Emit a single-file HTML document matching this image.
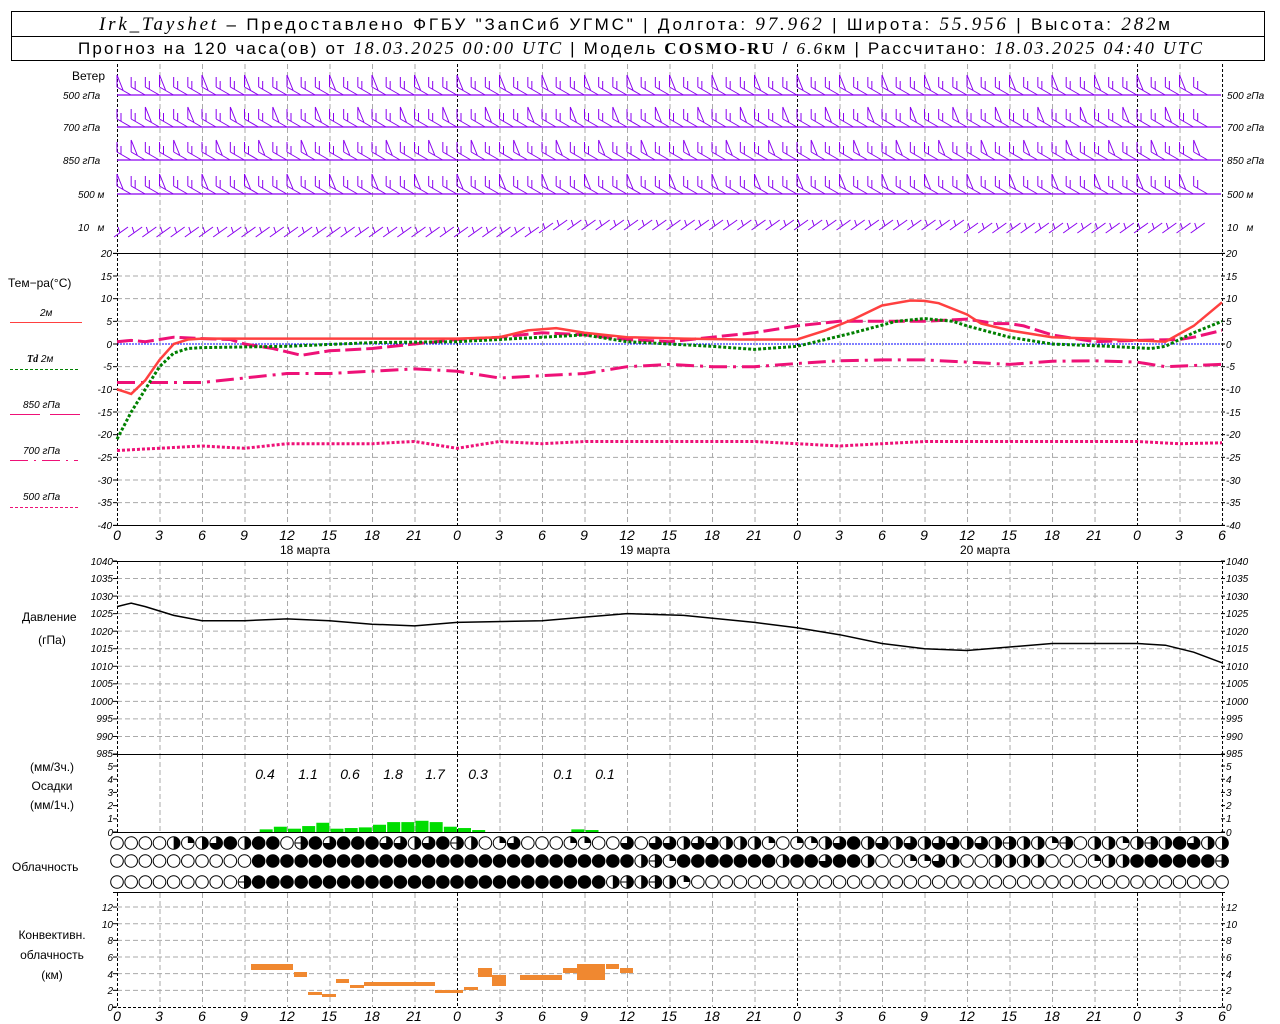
<!DOCTYPE html>
<html><head><meta charset="utf-8"><style>
html,body{margin:0;padding:0;background:#fff;width:1280px;height:1024px;overflow:hidden}
svg{display:block}
text{font-family:"Liberation Sans","DejaVu Sans",sans-serif;fill:#000}
.t{font-size:17px}
.tk{font-size:10px;font-style:italic}
.tm{font-size:14px;font-style:italic}
.lb{font-size:12px}
.it{font-family:"Liberation Serif",serif;font-style:italic}
</style></head><body>
<svg id="s" width="1280" height="1024" viewBox="0 0 1280 1024" xmlns="http://www.w3.org/2000/svg">
<rect x="11.5" y="11.5" width="1253" height="49" fill="none" stroke="#000"/>
<line x1="11" y1="36.5" x2="1265" y2="36.5" stroke="#000"/>
<g id="g"></g>
<!-- header -->
<text class="t" x="99" y="30" textLength="1071" lengthAdjust="spacing"><tspan class="it" font-size="19">Irk_Tayshet</tspan> – Предоставлено ФГБУ "ЗапСиб УГМС" | Долгота: <tspan class="it" font-size="19">97.962</tspan> | Широта: <tspan class="it" font-size="19">55.956</tspan> | Высота: <tspan class="it" font-size="19">282</tspan>м</text>
<text class="t" x="78" y="54" textLength="1124" lengthAdjust="spacing">Прогноз на 120 часа(ов) от <tspan class="it" font-size="18">18.03.2025 00:00 UTC</tspan>  | Модель <tspan font-family="Liberation Serif" font-weight="bold">COSMO-RU</tspan> / <tspan class="it">6.6</tspan>км | Рассчитано: <tspan class="it" font-size="18">18.03.2025 04:40 UTC</tspan></text>
<!-- wind labels -->
<text class="lb" x="72" y="80">Ветер</text>
<g class="tk" font-size="10">
<text class="tk" x="63" y="99">500 гПа</text><text class="tk" x="63" y="131">700 гПа</text><text class="tk" x="63" y="164">850 гПа</text><text class="tk" x="78" y="198">500 м</text><text class="tk" x="78" y="231">10 &#160; м</text>
<text class="tk" x="1227" y="99">500 гПа</text><text class="tk" x="1227" y="131">700 гПа</text><text class="tk" x="1227" y="164">850 гПа</text><text class="tk" x="1227" y="198">500 м</text><text class="tk" x="1227" y="231">10 &#160; м</text>
</g>
<!-- temp labels -->
<text class="lb" x="8" y="287">Тем−ра(°C)</text>
<text class="tk" x="40" y="316" font-style="normal">2м</text>
<line x1="10" y1="322.5" x2="82" y2="322.5" stroke="#ff4040"/>
<text class="tk" x="27" y="362"><tspan class="it" font-weight="bold">Td</tspan>  2м</text>
<line x1="10" y1="369.5" x2="78" y2="369.5" stroke="#008000" stroke-dasharray="3,2"/>
<text class="tk" x="23" y="408">850 гПа</text>
<line x1="10" y1="414.5" x2="82" y2="414.5" stroke="#ee1177" stroke-dasharray="30,10"/>
<text class="tk" x="23" y="454">700 гПа</text>
<line x1="10" y1="460.5" x2="78" y2="460.5" stroke="#ee1177" stroke-dasharray="18,6,2,6"/>
<text class="tk" x="23" y="500">500 гПа</text>
<line x1="10" y1="507.5" x2="78" y2="507.5" stroke="#ee1177" stroke-dasharray="3,2"/>
<g text-anchor="end">
<text class="tk" x="112" y="257">20</text><text class="tk" x="112" y="280">15</text><text class="tk" x="112" y="302">10</text><text class="tk" x="112" y="325">5</text><text class="tk" x="112" y="348">0</text><text class="tk" x="112" y="370">-5</text><text class="tk" x="112" y="393">-10</text><text class="tk" x="112" y="416">-15</text><text class="tk" x="112" y="438">-20</text><text class="tk" x="112" y="461">-25</text><text class="tk" x="112" y="484">-30</text><text class="tk" x="112" y="506">-35</text><text class="tk" x="112" y="529">-40</text>
</g>
<g>
<text class="tk" x="1226" y="257">20</text><text class="tk" x="1226" y="280">15</text><text class="tk" x="1226" y="302">10</text><text class="tk" x="1226" y="325">5</text><text class="tk" x="1226" y="348">0</text><text class="tk" x="1226" y="370">-5</text><text class="tk" x="1226" y="393">-10</text><text class="tk" x="1226" y="416">-15</text><text class="tk" x="1226" y="438">-20</text><text class="tk" x="1226" y="461">-25</text><text class="tk" x="1226" y="484">-30</text><text class="tk" x="1226" y="506">-35</text><text class="tk" x="1226" y="529">-40</text>
</g>
<!-- time labels -->
<g text-anchor="middle">
<text class="tm" x="117" y="540">0</text><text class="tm" x="159" y="540">3</text><text class="tm" x="202" y="540">6</text><text class="tm" x="244" y="540">9</text><text class="tm" x="287" y="540">12</text><text class="tm" x="329" y="540">15</text><text class="tm" x="372" y="540">18</text><text class="tm" x="414" y="540">21</text><text class="tm" x="457" y="540">0</text><text class="tm" x="499" y="540">3</text><text class="tm" x="542" y="540">6</text><text class="tm" x="584" y="540">9</text><text class="tm" x="627" y="540">12</text><text class="tm" x="669" y="540">15</text><text class="tm" x="712" y="540">18</text><text class="tm" x="754" y="540">21</text><text class="tm" x="797" y="540">0</text><text class="tm" x="839" y="540">3</text><text class="tm" x="882" y="540">6</text><text class="tm" x="924" y="540">9</text><text class="tm" x="967" y="540">12</text><text class="tm" x="1009" y="540">15</text><text class="tm" x="1052" y="540">18</text><text class="tm" x="1094" y="540">21</text><text class="tm" x="1137" y="540">0</text><text class="tm" x="1179" y="540">3</text><text class="tm" x="1222" y="540">6</text>
<text class="lb" x="305" y="554" font-size="13">18 марта</text><text class="lb" x="645" y="554" font-size="13">19 марта</text><text class="lb" x="985" y="554" font-size="13">20 марта</text>
<text class="tm" x="117" y="1021">0</text><text class="tm" x="159" y="1021">3</text><text class="tm" x="202" y="1021">6</text><text class="tm" x="244" y="1021">9</text><text class="tm" x="287" y="1021">12</text><text class="tm" x="329" y="1021">15</text><text class="tm" x="372" y="1021">18</text><text class="tm" x="414" y="1021">21</text><text class="tm" x="457" y="1021">0</text><text class="tm" x="499" y="1021">3</text><text class="tm" x="542" y="1021">6</text><text class="tm" x="584" y="1021">9</text><text class="tm" x="627" y="1021">12</text><text class="tm" x="669" y="1021">15</text><text class="tm" x="712" y="1021">18</text><text class="tm" x="754" y="1021">21</text><text class="tm" x="797" y="1021">0</text><text class="tm" x="839" y="1021">3</text><text class="tm" x="882" y="1021">6</text><text class="tm" x="924" y="1021">9</text><text class="tm" x="967" y="1021">12</text><text class="tm" x="1009" y="1021">15</text><text class="tm" x="1052" y="1021">18</text><text class="tm" x="1094" y="1021">21</text><text class="tm" x="1137" y="1021">0</text><text class="tm" x="1179" y="1021">3</text><text class="tm" x="1222" y="1021">6</text>
<text class="lb" x="52" y="644">(гПа)</text>
<text class="lb" x="52" y="771">(мм/3ч.)</text><text class="lb" x="52" y="790">Осадки</text><text class="lb" x="52" y="809">(мм/1ч.)</text>
<text class="lb" x="52" y="939">Конвективн.</text><text class="lb" x="52" y="959">облачность</text><text class="lb" x="52" y="979">(км)</text>
</g>
<text class="lb" x="22" y="621">Давление</text>
<text class="lb" x="12" y="871">Облачность</text>
<!-- pressure ticks -->
<g text-anchor="end">
<text class="tk" x="113" y="565" font-size="9">1040</text><text class="tk" x="113" y="582" font-size="9">1035</text><text class="tk" x="113" y="600" font-size="9">1030</text><text class="tk" x="113" y="617" font-size="9">1025</text><text class="tk" x="113" y="635" font-size="9">1020</text><text class="tk" x="113" y="652" font-size="9">1015</text><text class="tk" x="113" y="670" font-size="9">1010</text><text class="tk" x="113" y="687" font-size="9">1005</text><text class="tk" x="113" y="705" font-size="9">1000</text><text class="tk" x="113" y="722" font-size="9">995</text><text class="tk" x="113" y="740" font-size="9">990</text><text class="tk" x="113" y="757" font-size="9">985</text>
<text class="tk" x="113" y="770">5</text><text class="tk" x="113" y="783">4</text><text class="tk" x="113" y="796">3</text><text class="tk" x="113" y="809">2</text><text class="tk" x="113" y="822">1</text><text class="tk" x="113" y="836">0</text>
<text class="tk" x="113" y="911">12</text><text class="tk" x="113" y="928">10</text><text class="tk" x="113" y="944">8</text><text class="tk" x="113" y="961">6</text><text class="tk" x="113" y="978">4</text><text class="tk" x="113" y="994">2</text><text class="tk" x="113" y="1011">0</text>
</g>
<g>
<text class="tk" x="1226" y="565" font-size="9">1040</text><text class="tk" x="1226" y="582" font-size="9">1035</text><text class="tk" x="1226" y="600" font-size="9">1030</text><text class="tk" x="1226" y="617" font-size="9">1025</text><text class="tk" x="1226" y="635" font-size="9">1020</text><text class="tk" x="1226" y="652" font-size="9">1015</text><text class="tk" x="1226" y="670" font-size="9">1010</text><text class="tk" x="1226" y="687" font-size="9">1005</text><text class="tk" x="1226" y="705" font-size="9">1000</text><text class="tk" x="1226" y="722" font-size="9">995</text><text class="tk" x="1226" y="740" font-size="9">990</text><text class="tk" x="1226" y="757" font-size="9">985</text>
<text class="tk" x="1226" y="770">5</text><text class="tk" x="1226" y="783">4</text><text class="tk" x="1226" y="796">3</text><text class="tk" x="1226" y="809">2</text><text class="tk" x="1226" y="822">1</text><text class="tk" x="1226" y="836">0</text>
<text class="tk" x="1226" y="911">12</text><text class="tk" x="1226" y="928">10</text><text class="tk" x="1226" y="944">8</text><text class="tk" x="1226" y="961">6</text><text class="tk" x="1226" y="978">4</text><text class="tk" x="1226" y="994">2</text><text class="tk" x="1226" y="1011">0</text>
</g>
<g text-anchor="middle">
<text class="tm" font-size="13" x="265" y="779">0.4</text><text class="tm" font-size="13" x="308" y="779">1.1</text><text class="tm" font-size="13" x="350" y="779">0.6</text><text class="tm" font-size="13" x="393" y="779">1.8</text><text class="tm" font-size="13" x="435" y="779">1.7</text><text class="tm" font-size="13" x="478" y="779">0.3</text><text class="tm" font-size="13" x="563" y="779">0.1</text><text class="tm" font-size="13" x="605" y="779">0.1</text>
</g>
</svg>
<script>
var NS="http://www.w3.org/2000/svg",G=document.getElementById("g");
function el(n,a){var e=document.createElementNS(NS,n);for(var k in a)e.setAttribute(k,a[k]);G.appendChild(e);return e}
function X(h){return 117+h*14.167}
function TY(t){return 344-t*4.533}
function PY(p){return 561+(1040-p)*3.509}
function CY(k){return 1007-k*8.33}
var gray="#aaa";
for(var t=15;t>=-35;t-=5){if(t!=0)el("line",{x1:117,x2:1221,y1:TY(t),y2:TY(t),stroke:gray,"stroke-dasharray":"5,3"})}
for(var p=1035;p>985;p-=5)el("line",{x1:117,x2:1221,y1:PY(p),y2:PY(p),stroke:gray,"stroke-dasharray":"5,3"});
for(var k=2;k<=12;k+=2)el("line",{x1:117,x2:1221,y1:CY(k),y2:CY(k),stroke:gray,"stroke-dasharray":"5,3"});
el("line",{x1:117,x2:1221,y1:344,y2:344,stroke:"#0000ff","stroke-dasharray":"2,1","stroke-width":1});
var spans=[[64,253],[253,525],[561,754],[754,832],[893,1007]];
for(var h=0;h<=78;h+=3){var mid=(h%24==0)||h==78;spans.forEach(function(s){el("line",{x1:X(h)+.5,x2:X(h)+.5,y1:s[0],y2:s[1],stroke:mid?"#000":gray,"stroke-dasharray":mid?"3,2":"5,3"})})}
for(t=20;t>=-40;t-=5){el("line",{x1:113,x2:117,y1:TY(t),y2:TY(t),stroke:"#000"});el("line",{x1:1221,x2:1225,y1:TY(t),y2:TY(t),stroke:"#000"})}
for(p=1040;p>=985;p-=5){el("line",{x1:113,x2:117,y1:PY(p),y2:PY(p),stroke:"#000"});el("line",{x1:1221,x2:1225,y1:PY(p),y2:PY(p),stroke:"#000"})}
for(k=0;k<=5;k++){var y=832-k*13.2;el("line",{x1:113,x2:117,y1:y,y2:y,stroke:"#000"});el("line",{x1:1221,x2:1225,y1:y,y2:y,stroke:"#000"})}
for(k=0;k<=12;k+=2){el("line",{x1:113,x2:117,y1:CY(k),y2:CY(k),stroke:"#000"});el("line",{x1:1221,x2:1225,y1:CY(k),y2:CY(k),stroke:"#000"})}
[253.5,525.5,561.5,754.5,832.5,892.5].forEach(function(y){el("line",{x1:113,x2:1225,y1:y,y2:y,stroke:"#000"})});
el("line",{x1:113,x2:1225,y1:1007.5,y2:1007.5,stroke:"#000","stroke-dasharray":"3,2"});
// wind
var W="#8a00f0",lv=[95,127,160,194,228];
lv.forEach(function(y0,i){
 if(i<4){el("line",{x1:117,x2:1221,y1:y0,y2:y0,stroke:W,"stroke-width":1.2});}
 for(var h=0;h<=76;h++){
  var x=X(h)+4,y=y0;
  if(i<4){
   var d="M"+(x+10)+","+(y)+" L"+(x-4)+","+(y-8);
   if((h+i)%3==0){d+=" M"+(x-4)+","+(y-8)+" L"+(x-4)+","+(y-20)+" L"+(x+2)+","+(y-5);}
   else{d+=" M"+(x-4)+","+(y-8)+" L"+(x-4)+","+(y-18)+" M"+(x)+","+(y-6)+" L"+(x)+","+(y-14);}
   el("path",{d:d,stroke:W,fill:"none","stroke-width":1});
  }else{
   var yy=y0+(h<30?4:0)-(h>30&&h<60?3:0);
   el("path",{d:"M"+(x-7)+","+(yy+5)+" L"+(x+7)+","+(yy-5)+" M"+(x-1)+","+(yy+1)+" L"+(x-3)+","+(yy-5),stroke:W,fill:"none","stroke-width":1});
  }
 }
});
function curve(pts,f,attrs){var s="";for(var i=0;i<pts.length;i+=2)s+=X(pts[i]).toFixed(1)+","+f(pts[i+1]).toFixed(1)+" ";attrs.points=s;attrs.fill="none";el("polyline",attrs)}
curve([0,-23.5,6,-22.5,9,-23,12,-22,15,-22,18,-22,21,-21.5,24,-23,27,-21.5,30,-22,33,-21.5,36,-21.5,42,-21.5,45,-21.5,48,-22,51,-22.5,54,-22,57,-21.5,66,-21.5,72,-21.5,75,-22,78,-21.8],TY,{stroke:"#ee1177","stroke-width":3,"stroke-dasharray":"3,2"});
curve([0,-8.5,3,-8.5,6,-8.5,9,-7.5,12,-6.5,15,-6.5,18,-6,21,-5.5,24,-6,27,-7.5,30,-7,33,-6.5,36,-5,39,-4.5,42,-5,45,-5,48,-4.3,51,-3.7,54,-3.5,57,-3.5,60,-4,63,-4.5,66,-3.8,69,-3.7,72,-4,74,-5,78,-4.5],TY,{stroke:"#ee1177","stroke-width":3,"stroke-dasharray":"18,6,3,6"});
curve([0,0.5,1,0.8,2,0.5,3,1,4,1.5,6,1.2,8,1,9,0,11,-1,13,-2.5,15,-1.5,18,-1,21,0,24,1,27,1.5,30,2.5,33,2,36,1,39,0.5,42,1.5,45,2.5,48,4,51,5,54,5,57,5,60,5.5,62,4.5,63,4.5,64,4,66,2,69,0.5,72,0.8,75,1,76,1.5,78,3],TY,{stroke:"#ee1177","stroke-width":3,"stroke-dasharray":"16,5"});
curve([0,-21,1,-15,2,-10,3,-5,4,-2,5,-1,6,-0.8,12,-0.5,18,0.3,24,0.5,30,1.5,33,2,36,0.5,42,-0.5,45,-1.2,48,-0.5,50,1,52,2.5,55,5,57,5.6,59,5,60,4,63,1.5,66,0,70,-0.5,73,-1,74,-0.5,76,2.5,78,5],TY,{stroke:"#008000","stroke-width":3,"stroke-dasharray":"3,2"});
curve([0,-10,1,-11,2,-8,3,-3.5,4,0,5,1,6,1.2,12,1.2,18,1.2,24,1.2,27,1.5,29,3,31,3.5,33,2.5,36,1.5,40,1.2,44,1,48,1,50,3,52,5.5,54,8.5,56,9.6,57,9.5,58,9,60,6.5,61,4.5,63,3,66,1.5,69,1.2,72,0.8,74,0.5,76,4,78,9.2],TY,{stroke:"#ff4040","stroke-width":2.5});
curve([0,1027,1,1028,2,1027,4,1024.5,6,1023,9,1023,12,1023.5,15,1023,18,1022,21,1021.5,24,1022.5,30,1023,33,1024,36,1025,40,1024.5,45,1022.5,48,1021,51,1019,54,1016.5,57,1015,60,1014.5,63,1015.5,66,1016.5,69,1016.5,72,1016.5,74,1016,76,1014,78,1011],PY,{stroke:"#000","stroke-width":1.5});
var pr={10:.2,11:.4,12:.25,13:.45,14:.7,15:.25,16:.3,17:.35,18:.55,19:.75,20:.75,21:.85,22:.75,23:.4,24:.3,25:.15,32:.2,33:.15};
for(var hh in pr){el("rect",{x:X(+hh)+1,y:832-pr[hh]*13.2,width:13,height:pr[hh]*13.2,fill:"#00dd00"})}
[[251,964,42,6],[294,972,13,5],[308,992,14,3],[322,994,14,3],[336,979,13,4],[350,985,14,3],[364,982,71,4],[435,990,28,3],[464,987,14,3],[478,968,14,9],[492,975,14,11],[520,975,42,5],[563,968,14,5],[577,964,28,16],[606,964,13,5],[620,968,13,5]].forEach(function(r){el("rect",{x:r[0],y:r[1],width:r[2],height:r[3],fill:"#f08830"})});
var rows=[
"oooohqhtfhffoeftffftthtfehoqtoooqqoototthtthhhqoqqhtfhththtththehhqeohhqhehfthhhftqh",
"oooooooooofffffffffffffffffffffffffffheqfffffffhfftffhooqqthoohhhhoooqhhffffffefffhef",
"oooooooooefffffffffffffffffffffffffhehehqoooooooooooooooooooooooooooooooooooooooooooo"];
var ry=[843,861,882];
rows.forEach(function(r,ri){for(var i=0;i<79;i++){var c=r.charAt(i)||"o";var cx=X(i),cy=ry[ri],R=6.3;
 el("circle",{cx:cx,cy:cy,r:R,fill:c=="f"?"#000":"#fff",stroke:"#000","stroke-width":1});
 if(c=="h")el("path",{d:"M"+cx+","+(cy-R)+" A"+R+","+R+" 0 0 1 "+cx+","+(cy+R)+"Z",fill:"#000"});
 if(c=="q")el("path",{d:"M"+cx+","+cy+" L"+cx+","+(cy-R)+" A"+R+","+R+" 0 0 1 "+(cx+R)+","+cy+"Z",fill:"#000"});
 if(c=="t")el("path",{d:"M"+cx+","+cy+" L"+cx+","+(cy-R)+" A"+R+","+R+" 0 1 1 "+(cx-R)+","+cy+"Z",fill:"#000"});
 if(c=="e")el("path",{d:"M"+(cx-R)+","+cy+" L"+(cx+R)+","+cy+" M"+cx+","+(cy-R)+" A"+R+","+R+" 0 0 1 "+cx+","+(cy+R)+"Z",fill:"#000",stroke:"#000"});
}});
</script>
</body></html>
